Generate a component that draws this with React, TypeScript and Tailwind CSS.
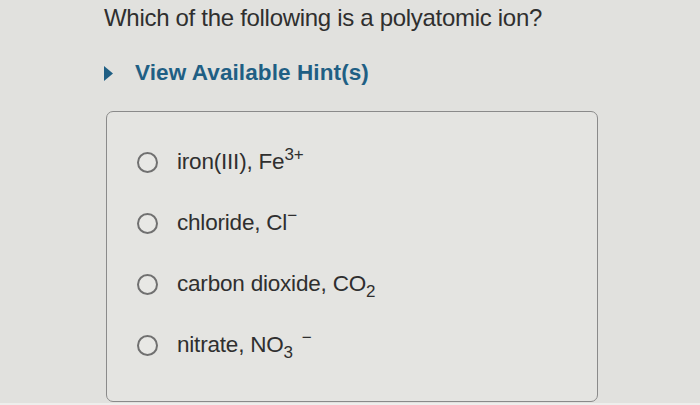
import React from 'react';

const options = [
    { id: 'fe', label: 'iron(III), Fe', sup: '3+' },
    { id: 'cl', label: 'chloride, Cl', sup: '−' },
    { id: 'co2', label: 'carbon dioxide, CO', sub: '2' },
    { id: 'no3', label: 'nitrate, NO', sub: '3', sup: '−', gap: true },
];

function Radio() {
    return (
        <span className="w-[21px] h-[21px] rounded-full border-2 border-[#707070] bg-[#e8e8e5] shrink-0" />
    );
}

export default function App() {
    return (
        <div
            className="w-[700px] h-[405px] bg-[#e1e1de] flex flex-col overflow-hidden text-[#2f2f2f]"
            style={{ fontFamily: '"Liberation Sans", Arial, sans-serif' }}
        >
            <h1 className="pl-[104px] pt-[4px] text-[24px] leading-[28px] tracking-[-0.3px] font-normal">
                Which of the following is a polyatomic ion?
            </h1>

            <button className="flex items-center ml-[104px] mt-[27px] gap-[22px] text-[#1f5f84] w-fit">
                <svg width="9" height="15" viewBox="0 0 9 15">
                    <polygon points="0,0 9,7.5 0,15" fill="#1f5f84" />
                </svg>
                <span className="text-[22.5px] leading-[28px] font-bold tracking-[0.1px]">
                    View Available Hint(s)
                </span>
            </button>

            <div className="ml-[106px] mt-[24px] w-[492px] h-[291px] border-[1.5px] border-[#8a8a8a] rounded-[7px] bg-[#e4e4e1] flex flex-col pt-[35px] gap-[31px]">
                {options.map((o) => (
                    <label key={o.id} className="flex items-center h-[30px] pl-[30px] gap-[19px]">
                        <Radio />
                        <span className="text-[22.5px] leading-[30px] tracking-[-0.2px] whitespace-nowrap">
                            {o.label}
                            {o.sub && (
                                <span className="inline-block align-baseline text-[17px] leading-none relative top-[6px]">
                                    {o.sub}
                                </span>
                            )}
                            {o.sup && (
                                <span
                                    className={`inline-block align-baseline text-[17px] leading-none relative -top-[9px] ${o.gap ? 'ml-[9px]' : ''}`}
                                >
                                    {o.sup}
                                </span>
                            )}
                        </span>
                    </label>
                ))}
            </div>

            <div className="flex-1 mt-[1px] bg-[#eeeeec]" />
        </div>
    );
}
